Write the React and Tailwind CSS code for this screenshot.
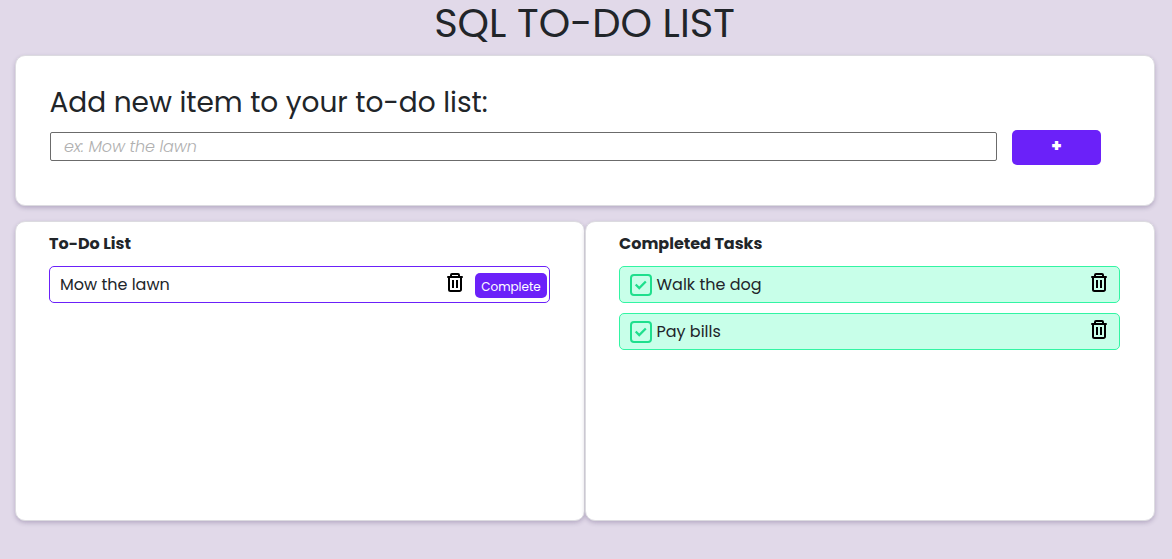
import React from "react";

function TrashIcon() {
  return (
    <svg width="16" height="19" viewBox="0 0 16 19" fill="none" className="block shrink-0 text-black">
      <path d="M4 3V2a1 1 0 0 1 1-1h6a1 1 0 0 1 1 1v1" stroke="currentColor" strokeWidth="2" />
      <rect x="0" y="3" width="16" height="2" rx="1" fill="currentColor" />
      <path d="M2 4v12.5a1.5 1.5 0 0 0 1.5 1.5h9a1.5 1.5 0 0 0 1.5-1.5V4" stroke="currentColor" strokeWidth="2" />
      <path d="M6 7v8M10 7v8" stroke="currentColor" strokeWidth="2" />
    </svg>
  );
}

function CheckIcon() {
  return (
    <svg width="22" height="22" viewBox="0 0 22 22" fill="none" className="block shrink-0 text-[#1fdf8d]">
      <rect x="1" y="1" width="20" height="20" rx="3" stroke="currentColor" strokeWidth="2" />
      <path d="M5.7 10.5L9.24 14.03L15.8 7.46" stroke="currentColor" strokeWidth="2.3" />
    </svg>
  );
}

function Card({ className, children }) {
  return (
    <section
      className={
        "rounded-[10px] border border-[#dcdbe0] bg-white shadow-[0_2px_4px_rgba(60,40,90,0.25)] " + className
      }
    >
      {children}
    </section>
  );
}

function CompletedTask({ text }) {
  return (
    <li className="flex h-[37px] items-start rounded-[5px] border border-[#32f5a3] bg-[#c8ffe9] pl-[10px] pr-3">
      <div className="mt-[7px]">
        <CheckIcon />
      </div>
      <span className="ml-[4.5px] mt-[6px] text-base leading-6">{text}</span>
      <div className="ml-auto mt-[6px]">
        <TrashIcon />
      </div>
    </li>
  );
}

export default function App() {
  return (
    <main className="h-[559px] bg-[#e1d9e9] px-[15px] font-['Poppins',sans-serif] text-[#212529]">
      <h1 className="h-[55px] pr-[3px] text-center text-[40px] leading-[46px]">SQL TO-DO LIST</h1>
      <Card className="h-[151px] w-[1140px] pl-[34px] pt-[30px]">
        <h2 className="-ml-[0.5px] text-[28px] leading-[34px]">Add new item to your to-do list:</h2>
        <form className="mt-[10px] flex items-start">
          <input
            type="text"
            placeholder="ex: Mow the lawn"
            className="mt-[2px] h-[29px] w-[947px] rounded-[2px] border border-[#6b6b6b] bg-white px-[13px] text-base leading-6 placeholder:font-light placeholder:italic placeholder:tracking-[-0.12px] placeholder:text-[#b0b0b0]"
          />
          <button
            type="button"
            className="ml-[15px] h-[35px] w-[89px] rounded-[5px] bg-[#6b21f9] pb-px text-[17px] font-extrabold text-white"
          >
            +
          </button>
        </form>
      </Card>
      <div className="mt-[15px] flex">
        <Card className="h-[300px] w-[570px] px-[33px] pt-[10px]">
          <h3 className="text-base font-bold leading-6">To-Do List</h3>
          <ul className="mt-[10px]">
            <li className="flex h-[37px] w-[501px] items-start rounded-[5px] border border-[#6b21f9] pl-[10px] pr-[2px]">
              <span className="mt-[6px] text-base leading-6">Mow the lawn</span>
              <div className="ml-auto mt-[6px]">
                <TrashIcon />
              </div>
              <button
                type="button"
                className="ml-3 mt-[6px] h-[25px] w-[72px] rounded-[5px] bg-[#6b21f9] pt-[3px] text-[12px] text-white"
              >
                Complete
              </button>
            </li>
          </ul>
        </Card>
        <Card className="h-[300px] w-[570px] px-[33px] pt-[10px]">
          <h3 className="text-base font-bold leading-6">Completed Tasks</h3>
          <ul className="mt-[10px] flex w-[501px] flex-col gap-[10px]">
            <CompletedTask text="Walk the dog" />
            <CompletedTask text="Pay bills" />
          </ul>
        </Card>
      </div>
    </main>
  );
}
